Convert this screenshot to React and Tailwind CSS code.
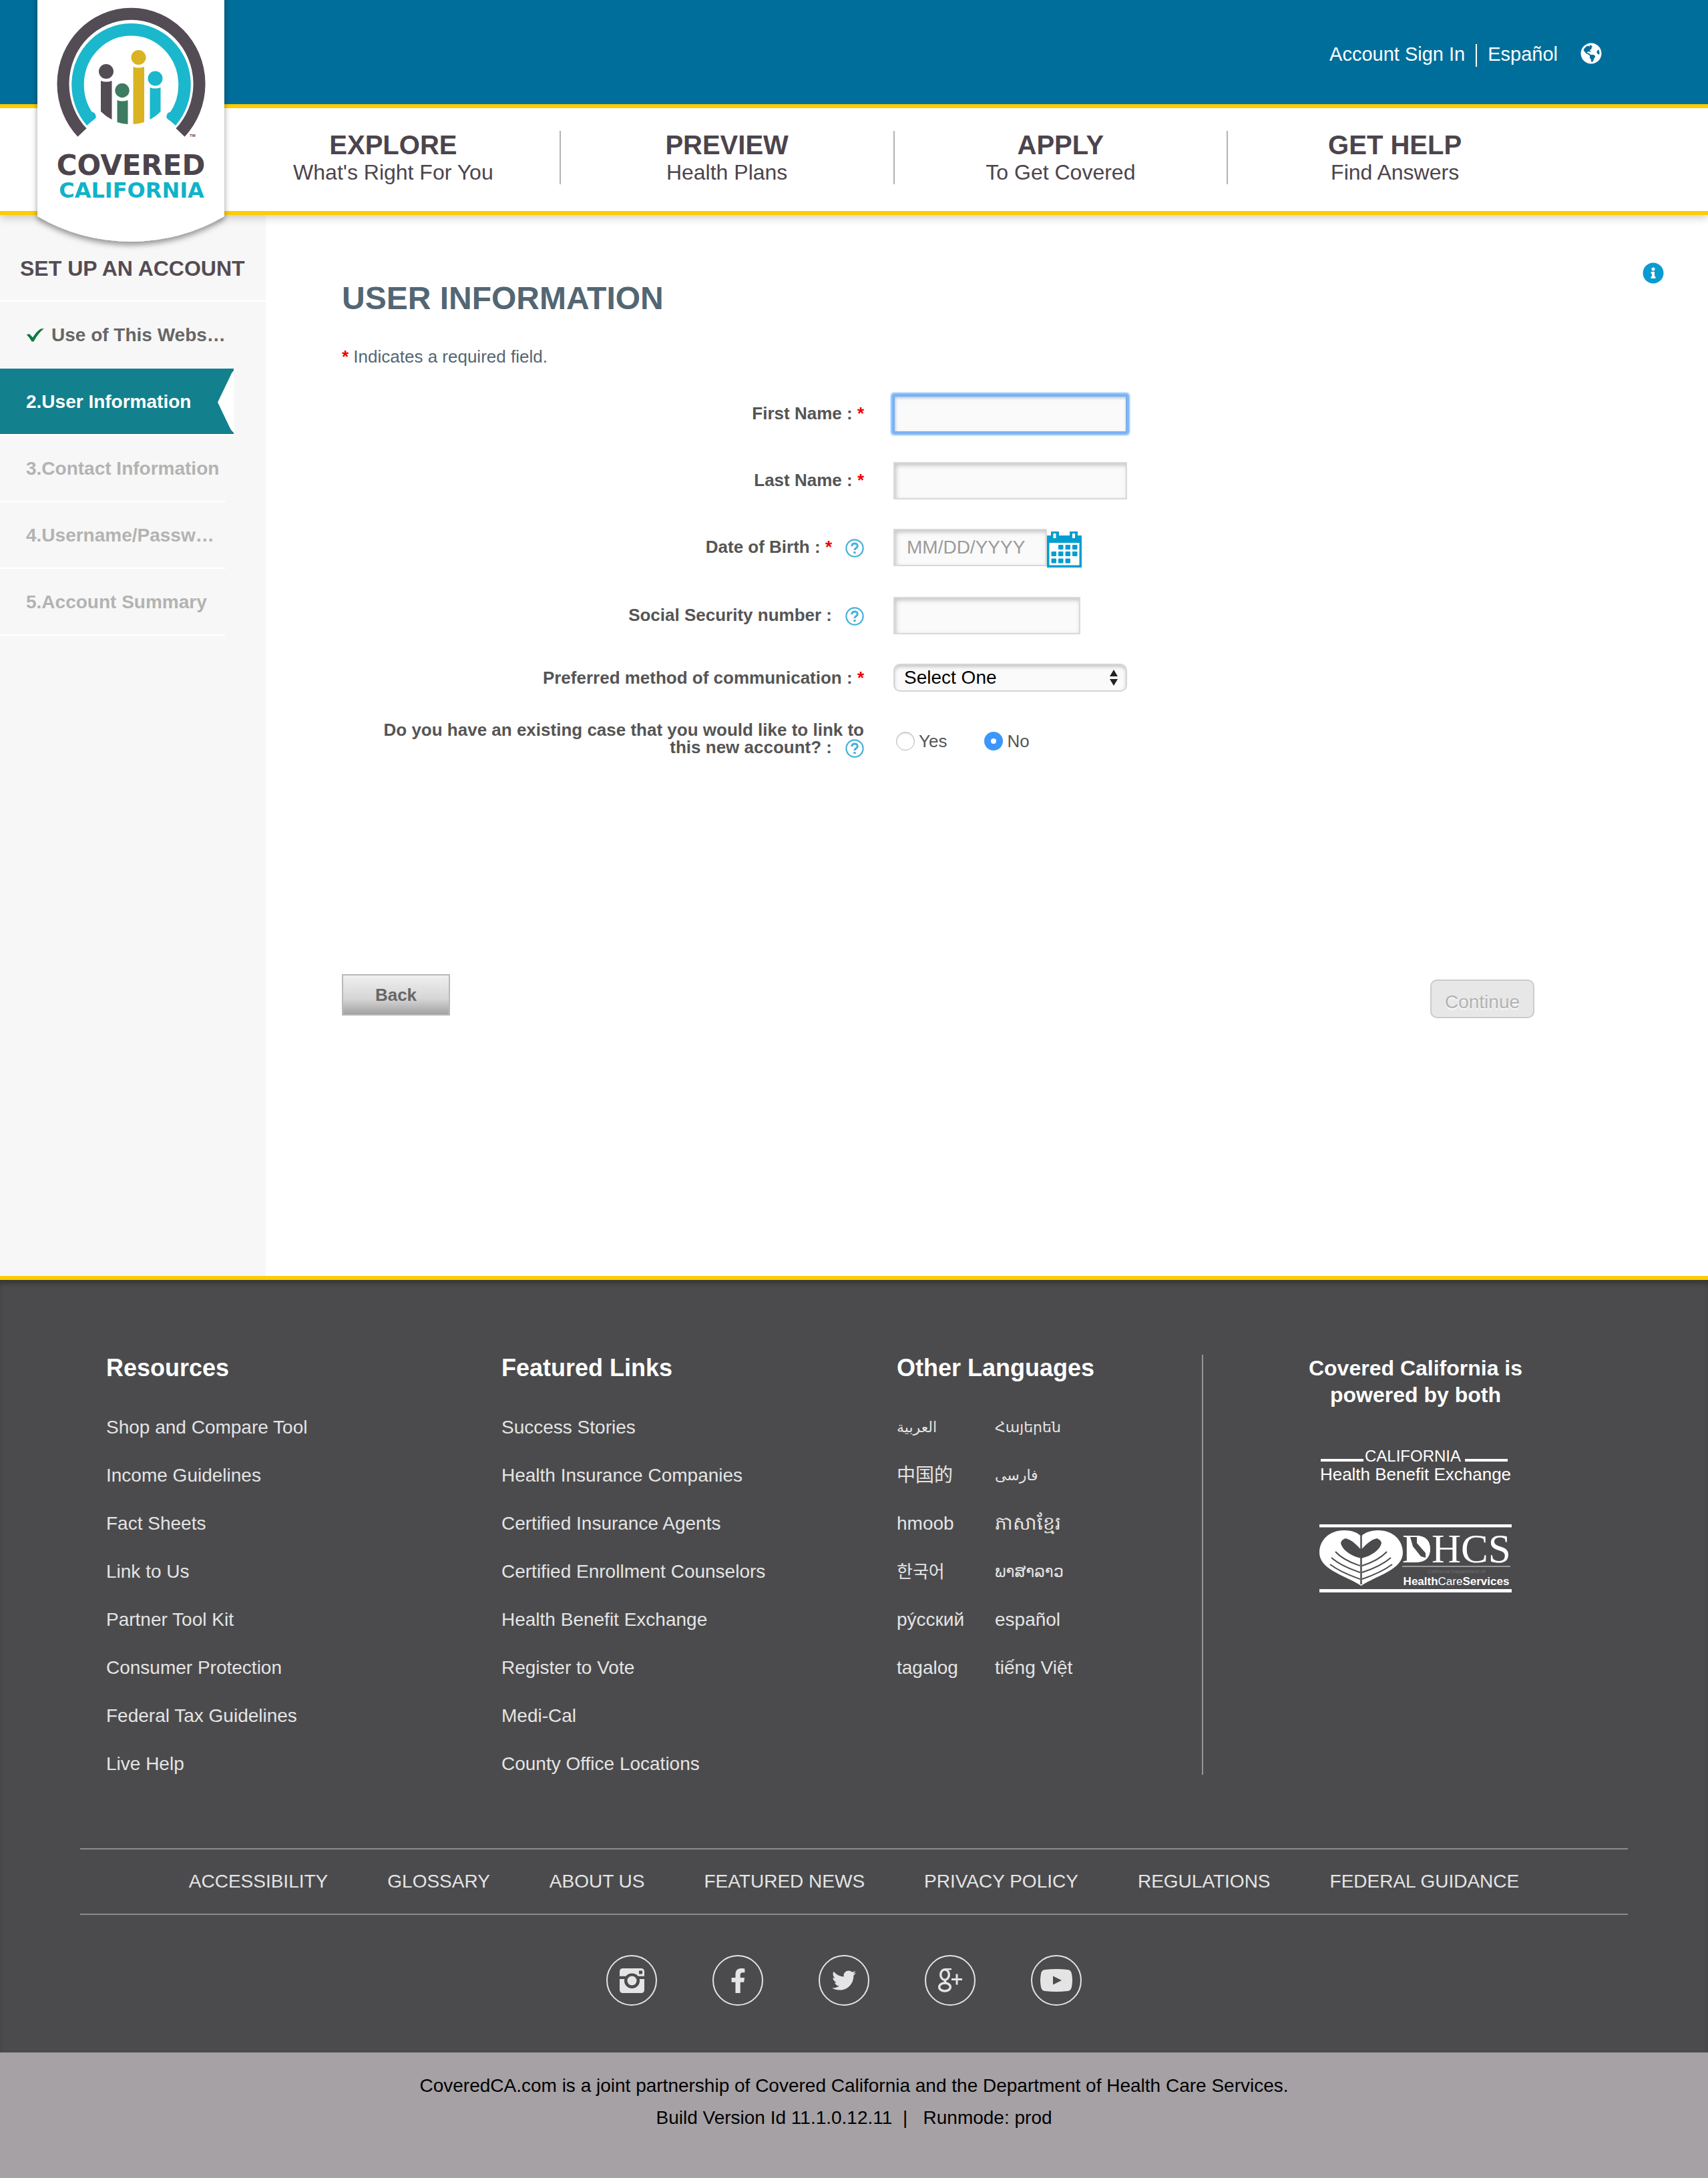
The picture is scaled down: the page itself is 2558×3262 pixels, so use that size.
import React from "react";
import { FaFacebookF, FaGlobeAmericas, FaInfoCircle, FaTwitter } from "react-icons/fa";

const NAV = [
  ["EXPLORE", "What's Right For You"],
  ["PREVIEW", "Health Plans"],
  ["APPLY", "To Get Covered"],
  ["GET HELP", "Find Answers"],
];

const RESOURCES = [
  "Shop and Compare Tool",
  "Income Guidelines",
  "Fact Sheets",
  "Link to Us",
  "Partner Tool Kit",
  "Consumer Protection",
  "Federal Tax Guidelines",
  "Live Help",
];

const FEATURED = [
  "Success Stories",
  "Health Insurance Companies",
  "Certified Insurance Agents",
  "Certified Enrollment Counselors",
  "Health Benefit Exchange",
  "Register to Vote",
  "Medi-Cal",
  "County Office Locations",
];

const LANGUAGES = [
  ["العربية", "ar", "text-[22px]"],
  ["Հայերեն", "hy", "text-[22px]"],
  ["中国的", "zh", "text-[28px]"],
  ["فارسی", "fa", "text-[22px]"],
  ["hmoob", "hmn", "text-[28px]"],
  ["ភាសាខ្មែរ", "km", "text-[28px]"],
  ["한국어", "ko", "text-[26px]"],
  ["ພາສາລາວ", "lo", "text-2xl"],
  ["рýсский", "ru", "text-[28px]"],
  ["español", "es", "text-[28px]"],
  ["tagalog", "tl", "text-[28px]"],
  ["tiếng Việt", "vi", "text-[28px]"],
];

const POLICY = [
  "ACCESSIBILITY",
  "GLOSSARY",
  "ABOUT US",
  "FEATURED NEWS",
  "PRIVACY POLICY",
  "REGULATIONS",
  "FEDERAL GUIDANCE",
];

const FIELD =
  "h-14 border-2 border-[#d9d9d9] bg-[#fafafa] px-[18px] text-[28px] text-[#222] shadow-[inset_2px_3px_6px_rgba(0,0,0,0.22)] outline-none placeholder:text-[#9b9b9b]";

function Badge() {
  return (
    <a href="#home" aria-label="Covered California" className="absolute left-0 top-0 z-10">
      <svg width="400" height="390" viewBox="0 0 400 390" className="block">
        <defs>
          <filter id="badge-shadow" x="-20%" y="-10%" width="140%" height="130%">
            <feDropShadow dx="0" dy="5" stdDeviation="4" floodColor="#000" floodOpacity="0.4" />
          </filter>
        </defs>
        <path d="M56 -20V324A277 277 0 0 0 336 324V-20Z" fill="#fff" filter="url(#badge-shadow)" />
        <path d="M123 198.5A102 105 0 1 1 270 198.5" fill="none" stroke="#544c54" strokeWidth="18" />
        <path d="M137 182A80 82.5 0 1 1 256 182" fill="none" stroke="#1ab7cd" strokeWidth="18.5" />
        <circle cx="137" cy="174" r="6.5" fill="#1ab7cd" />
        <circle cx="256" cy="174" r="6.5" fill="#1ab7cd" />
        <g fill="#544c54">
          <circle cx="159" cy="107" r="11" />
          <path d="M151 121Q159 124 167.500 121V179Q158 174 151 167Z" />
        </g>
        <g fill="#3d7b62">
          <circle cx="183" cy="135.500" r="10.700" />
          <path d="M175.500 150Q183 153 191.500 150V186Q183 185.500 175.500 183Z" />
        </g>
        <g fill="#d9b322">
          <circle cx="207.500" cy="86" r="11" />
          <path d="M199.500 100Q207 103 216 100V183Q208 185.500 199.500 186Z" />
        </g>
        <g fill="#1ab7cd">
          <circle cx="232.500" cy="117.500" r="11" />
          <path d="M224.500 131Q232 134 240.500 131V167Q234 174 224.500 179Z" />
        </g>
        <text x="284" y="205" fontSize="6" fontFamily="Liberation Sans, sans-serif" fontWeight="700" fill="#544c54">TM</text>
        <text x="196" y="262" textAnchor="middle" fontSize="42" fontWeight="700" fontFamily="DejaVu Sans, sans-serif" fill="#4c444c">COVERED</text>
        <text x="197" y="296" textAnchor="middle" fontSize="32" fontWeight="700" fontFamily="DejaVu Sans, sans-serif" fill="#0fb3c9">CALIFORNIA</text>
      </svg>
    </a>
  );
}

function Help({ topic }) {
  return (
    <button type="button" aria-label={`Help: ${topic}`} className="ml-5 inline-block align-[-7px]">
      <svg width="28" height="28" viewBox="0 0 28 28" fill="none" className="block">
        <circle cx="14" cy="14" r="12.600" stroke="#45b0d8" strokeWidth="2.200" />
        <path d="M9.800 11.200C9.800 8.400 11.600 7 14 7s4.300 1.400 4.300 3.800c0 2.900-4.300 3-4.300 6.200" stroke="#45b0d8" strokeWidth="3" />
        <rect x="12.400" y="19" width="3.200" height="3.200" fill="#45b0d8" />
      </svg>
    </button>
  );
}

function Star() {
  return <span className="text-[#f00000]">*</span>;
}

function Row({ id, label, required, help, pad = "pt-3.5", children }) {
  return (
    <div className="grid grid-cols-[782fr_960fr] gap-x-11">
      <div className={`${pad} pl-10 text-right text-[26px] font-bold leading-[26px] text-[#555]`}>
        <label htmlFor={id} id={`${id}-label`}>
          {label} :{required && " "}
          {required && <Star />}
        </label>
        {help && <Help topic={label} />}
      </div>
      <div className="flex items-start">{children}</div>
    </div>
  );
}

function CalendarIcon() {
  const cells = [
    [17, 20], [27.5, 20], [38, 20],
    [6.5, 30], [17, 30], [27.5, 30], [38, 30],
    [6.5, 40.5], [17, 40.5], [27.5, 40.5],
  ];
  return (
    <svg width="52" height="54" viewBox="0 0 52 54" className="block">
      <path d="M0 6H6V0H18V6H34V0H46V6H52V54H0Z" fill="#049dd0" />
      <path d="M9.500 3h4v7h-4zM38 3h4v7h-4zM3.500 17h45v33.500h-45z" fill="#fff" />
      {cells.map(([x, y]) => (
        <rect key={`${x}-${y}`} x={x} y={y} width="7.500" height="7" rx="1" fill="#049dd0" />
      ))}
    </svg>
  );
}

function Sidebar() {
  const step = "flex h-[100px] w-[338px] items-center border-b-2 border-white pl-[39px] pt-0.5 text-[28px] font-bold text-[#b3b3b3]";
  return (
    <aside className="w-[398px] shrink-0 bg-[#f7f7f7]">
      <h2 className="h-[130px] border-b-2 border-white pl-[30px] pt-[60px] text-[32px] font-bold leading-10 text-[#544c54]">
        SET UP AN ACCOUNT
      </h2>
      <ol>
        <li className="flex h-[100px] w-[340px] items-center gap-[11px] border-b-2 border-white pl-10 pt-0.5 text-[28px] font-bold text-[#666]">
          <svg width="26" height="20" viewBox="0 0 26 20" className="shrink-0">
            <path d="M0 9.500Q3 7 5.500 9.500L9 13.500Q15 4 21 0.500L26 0Q17 7 10.500 19.500H7.500Q4 13 0 9.500Z" fill="#0b7a42" />
          </svg>
          Use of This Webs…
        </li>
        <li
          aria-current="step"
          className="flex h-[100px] w-[350px] items-stretch justify-between border-b-2 border-white bg-[#13808d] bg-clip-padding pl-[39px] text-[28px] font-bold text-white"
        >
          <span className="self-center pt-0.5">2.User Information</span>
          <svg width="25" height="98" viewBox="0 0 25 98" className="block">
            <path d="M25 3Q22 6 20 11L1 50.500L18 86Q21 93 25 96Z" fill="#fff" />
          </svg>
        </li>
        <li className={step}>3.Contact Information</li>
        <li className={step}>4.Username/Passw…</li>
        <li className={step}>5.Account Summary</li>
      </ol>
    </aside>
  );
}

function AccountForm() {
  return (
    <form className="flex flex-col">
      <div className="flex flex-col gap-11">
        <Row id="first" label="First Name" required>
          <input
            id="first"
            type="text"
            className="h-14 w-[350px] rounded-[2px] border-2 border-[#79aeea] bg-[#fafafa] px-[18px] text-[28px] shadow-[0_0_0_3px_#7fb8f9,0_0_0_5px_#c5dffc,inset_1px_2px_4px_rgba(60,110,170,0.4)] outline-none"
          />
        </Row>
        <Row id="last" label="Last Name" required>
          <input id="last" type="text" className={`${FIELD} w-[350px]`} />
        </Row>
        <Row id="dob" label="Date of Birth" required help>
          <input id="dob" type="text" placeholder="MM/DD/YYYY" className={`${FIELD} w-[230px]`} />
          <button type="button" aria-label="Open calendar" className="mt-1">
            <CalendarIcon />
          </button>
        </Row>
        <Row id="ssn" label="Social Security number" help>
          <input id="ssn" type="text" className={`${FIELD} w-[280px]`} />
        </Row>
        <Row id="method" label="Preferred method of communication" required pad="pt-2">
          <div className="relative">
            <select
              id="method"
              className="block h-[42px] w-[350px] appearance-none rounded-[10px] border-2 border-[#d5d5d5] bg-[#fafafa] pl-3.5 text-[28px] leading-[38px] text-black shadow-[inset_0_3px_5px_rgba(0,0,0,0.2)]"
            >
              <option>Select One</option>
            </select>
            <svg width="12" height="24" viewBox="0 0 12 24" className="pointer-events-none absolute right-3.5 top-[9px]">
              <path d="M6 0l6 10H0zM6 24l6-10H0z" fill="#222" />
            </svg>
          </div>
        </Row>
        <Row id="linked" label="Do you have an existing case that you would like to link to this new account?" help pad="pt-0">
          <div role="radiogroup" aria-labelledby="linked-label" className="flex gap-14 pl-1 pt-4 text-[26px] leading-7 text-[#555]">
            <label className="flex items-center gap-1.5">
              <input
                id="linked"
                type="radio"
                name="linked"
                className="h-7 w-7 appearance-none rounded-full border border-[#b5b5b5] bg-white shadow-[inset_0_2px_2px_rgba(0,0,0,0.12)]"
              />
              Yes
            </label>
            <label className="flex items-center gap-1.5">
              <input
                type="radio"
                name="linked"
                defaultChecked
                className="h-7 w-7 appearance-none rounded-full border-[10px] border-[#3b97fb] bg-white"
              />
              No
            </label>
          </div>
        </Row>
      </div>
      <div className="mt-[324px] flex items-start justify-between">
        <button
          type="button"
          className="h-[62px] w-[162px] border-2 border-[#b9b9b9] bg-linear-to-b from-[#efefef] via-[#d6d6d6] via-60% to-[#a3a3a3] text-[26px] font-bold text-[#666]"
        >
          Back
        </button>
        <button
          type="submit"
          disabled
          className="mt-2 h-[58px] w-[156px] rounded-[10px] border-2 border-[#cbcbcb] bg-[#e7e7e7] pt-2.5 text-[28px] leading-8 text-[#b3b3b3] [text-shadow:0_2px_2px_#fff]"
        >
          Continue
        </button>
      </div>
    </form>
  );
}

function ExchangeLogo() {
  return (
    <svg width="288" height="60" viewBox="0 -4 288 60" fill="#fff" fontFamily="Liberation Sans, Arial, sans-serif" role="img" aria-label="California Health Benefit Exchange">
      <path d="M2 16h64v4H2zM218 16h64v4h-64z" />
      <text x="140" y="20" textAnchor="middle" fontSize="24">CALIFORNIA</text>
      <text x="144" y="48" textAnchor="middle" fontSize="26">Health Benefit Exchange</text>
    </svg>
  );
}

function DhcsLogo() {
  return (
    <svg width="288" height="102" viewBox="0 0 288 102" fill="#fff" role="img" aria-label="DHCS Health Care Services">
      <path d="M0 0h288v4.500H0zM0 97h288v5H0z" />
      <path d="M62.500 18C56 11 46 9 36 9C15 9 0 24 0 42C0 68 38 76 62.500 92C87 76 125 68 125 42C125 24 110 9 89 9C79 9 69 11 62.500 18Z" />
      <path d="M62.500 38C54 29 48 23 39 21Q33 23 32 28C34 38 46 47 62.500 51C79 47 91 38 93 28Q92 23 86 21C77 23 71 29 62.500 38Z" fill="#4b4b4d" />
      <g fill="none" stroke="#4b4b4d" strokeWidth="2">
        <path d="M24 41Q36 54 61 62M18 50Q33 63 61 72M16 60Q32 72 61 82M101 41Q89 54 64 62M107 50Q92 63 64 72M109 60Q93 72 64 82" />
        <path d="M62.500 16V90" strokeWidth="2.500" />
      </g>
      <text x="124" y="57" fontSize="61" fontFamily="Liberation Serif, Times New Roman, serif">DHCS</text>
      <path d="M131 17H147C160 18 166 26 166 37C166 49 159 56 147 56H131Z" />
      <path d="M136 19H146V28L159 43V50L152 48L140 33Z" fill="#4b4b4d" />
      <path d="M124 62h162v2H124z" fill="#9a9a9b" />
      <text x="205" y="73" textAnchor="middle" fontSize="8" fill="#6d6d6f" fontFamily="Liberation Sans, Arial, sans-serif">California Department of</text>
      <text x="205" y="91" textAnchor="middle" fontSize="17" fontWeight="700" fontFamily="Liberation Sans, Arial, sans-serif">
        Health<tspan fontWeight="400">Care</tspan>Services
      </text>
    </svg>
  );
}

function InstagramIcon() {
  return (
    <svg width="37" height="37" viewBox="0 0 37 37">
      <path
        fillRule="evenodd"
        fill="currentColor"
        d="M5 0H32Q37 0 37 5V11.800H27.500A11.500 11.500 0 0 0 9.500 11.800H0V5Q0 0 5 0ZM29 3.500V8.500H34V3.500ZM0 16H7.300A11.500 11.500 0 1 0 29.700 16H37V32Q37 37 32 37H5Q0 37 0 32Z"
      />
      <circle cx="18.500" cy="18.500" r="7" fill="currentColor" />
    </svg>
  );
}

function GooglePlusIcon() {
  return (
    <svg width="36" height="36" viewBox="0 0 36 36" fill="none" stroke="currentColor">
      <ellipse cx="10" cy="9.500" rx="6.300" ry="7.800" strokeWidth="3.400" />
      <path d="M10 1.200H20" strokeWidth="2.400" />
      <path d="M11 17.500Q9 20 12 22.500" strokeWidth="3.400" />
      <ellipse cx="10" cy="28" rx="8.400" ry="6" strokeWidth="3.400" />
      <path d="M20 16.500H36M28 8.500V24.500" strokeWidth="3" />
    </svg>
  );
}

function YoutubeIcon() {
  return (
    <svg width="48" height="34" viewBox="0 0 48 34" fill="currentColor">
      <path
        fillRule="evenodd"
        d="M7 1Q24 -1 41 1Q46 1.500 47 7Q49 17 47 27Q46 32.500 41 33Q24 35 7 33Q2 32.500 1 27Q-1 17 1 7Q2 1.500 7 1ZM19 10.500V23.500L32 17Z"
      />
    </svg>
  );
}

function LinkColumn({ title, items }) {
  return (
    <section className="flex flex-col gap-[53px]">
      <h3 className="text-4xl/10 font-bold text-white">{title}</h3>
      <ul className="flex flex-col gap-10">
        {items.map((item) => (
          <li key={item} className="leading-8">
            <a href="#link">{item}</a>
          </li>
        ))}
      </ul>
    </section>
  );
}

function Footer() {
  const social = [
    ["Instagram", <InstagramIcon />],
    ["Facebook", <FaFacebookF size={37} />],
    ["Twitter", <FaTwitter size={36} />],
    ["Google Plus", <GooglePlusIcon />],
    ["YouTube", <YoutubeIcon />],
  ];
  return (
    <footer>
      <div className="border-t-[6px] border-[#fc0] bg-[#4b4b4d] px-[120px] pb-[70px] pt-28 text-[28px] text-[#e4e4e4] shadow-[inset_0_8px_10px_-4px_rgba(0,0,0,0.35)]">
        <div className="grid grid-cols-[592fr_592fr_457fr_638fr] pl-[39px]">
          <LinkColumn title="Resources" items={RESOURCES} />
          <LinkColumn title="Featured Links" items={FEATURED} />
          <section className="flex flex-col gap-[53px]">
            <h3 className="text-4xl/10 font-bold text-white">Other Languages</h3>
            <ul className="grid grid-cols-[147px_1fr] gap-y-10">
              {LANGUAGES.map(([name, lang, size]) => (
                <li
                  key={lang}
                  lang={lang}
                  className={`${size} h-8 whitespace-nowrap font-['Liberation_Sans','Noto_Sans_CJK_SC','DejaVu_Sans',sans-serif] leading-8`}
                >
                  <a href="#lang">{name}</a>
                </li>
              ))}
            </ul>
          </section>
          <section className="flex flex-col items-center border-l-2 border-[#98959a] text-center">
            <h3 className="w-[360px] text-[32px] font-bold leading-10 text-white">Covered California is powered by both</h3>
            <div className="mt-14 flex flex-col gap-[58px]">
              <ExchangeLogo />
              <DhcsLogo />
            </div>
          </section>
        </div>
        <nav aria-label="Policies" className="mt-[110px] flex h-[100px] items-center justify-center gap-[89px] border-y-2 border-[#8c8a8d]">
          {POLICY.map((item) => (
            <a key={item} href="#policy">{item}</a>
          ))}
        </nav>
        <div className="mt-15 flex justify-center gap-[83px] pr-[30px]">
          {social.map(([name, icon]) => (
            <a
              key={name}
              href="#social"
              aria-label={name}
              className="flex h-[76px] w-[76px] items-center justify-center rounded-full border-2 border-[#e4e4e4]"
            >
              {icon}
            </a>
          ))}
        </div>
      </div>
      <div className="bg-[#a5a1a5] pb-[68px] pt-[26px] text-center text-[28px] leading-[48px] text-black">
        <p>CoveredCA.com is a joint partnership of Covered California and the Department of Health Care Services.</p>
        <p>Build Version Id 11.1.0.12.11&nbsp; |&nbsp;&nbsp; Runmode: prod</p>
      </div>
    </footer>
  );
}

export default function App() {
  return (
    <div className="bg-white font-['Liberation_Sans',Arial,sans-serif]">
      <header className="relative z-10 shadow-[0_4px_12px_rgba(0,0,0,0.2)]">
        <Badge />
        <div className="flex h-[162px] items-center justify-end border-b-[6px] border-[#fc0] bg-[#006e9b] pr-[159px] text-[29px] text-white">
          <a href="#signin" className="mt-2">Account Sign In</a>
          <span className="mx-4 mt-2.5 h-[34px] w-0.5 bg-white" />
          <a href="#es" className="mt-2">Español</a>
          <a href="#language" aria-label="Choose language" className="ml-[34px] mt-1">
            <FaGlobeAmericas size={32} />
          </a>
        </div>
        <nav aria-label="Main" className="grid h-[160px] grid-cols-4 border-b-[6px] border-[#fc0] bg-white pl-[340px] pr-[219px] pt-[34px]">
          {NAV.map(([title, sub], i) => (
            <a
              key={title}
              href="#nav"
              className={`flex h-20 flex-col items-center text-[#4c444c] ${i < 3 ? "border-r-2 border-[#b3b1b3]" : ""}`}
            >
              <span className="text-[40px] font-bold leading-[42px]">{title}</span>
              <span className="text-[32px] leading-10">{sub}</span>
            </a>
          ))}
        </nav>
      </header>
      <div className="flex">
        <Sidebar />
        <main className="flex flex-1 items-start pb-[386px] pl-[114px] pr-[66px]">
          <div className="flex-1 pt-[97px]">
            <h1 className="text-5xl/14 font-bold text-[#536673]">USER INFORMATION</h1>
            <p className="mb-[42px] mt-[43px] text-[26px] leading-8 text-[#536673]">
              <b><Star /></b> Indicates a required field.
            </p>
            <AccountForm />
          </div>
          <button type="button" aria-label="Page information" className="ml-[162px] mt-[71px] text-[#0a9bd0]">
            <FaInfoCircle size={32} />
          </button>
        </main>
      </div>
      <Footer />
    </div>
  );
}
